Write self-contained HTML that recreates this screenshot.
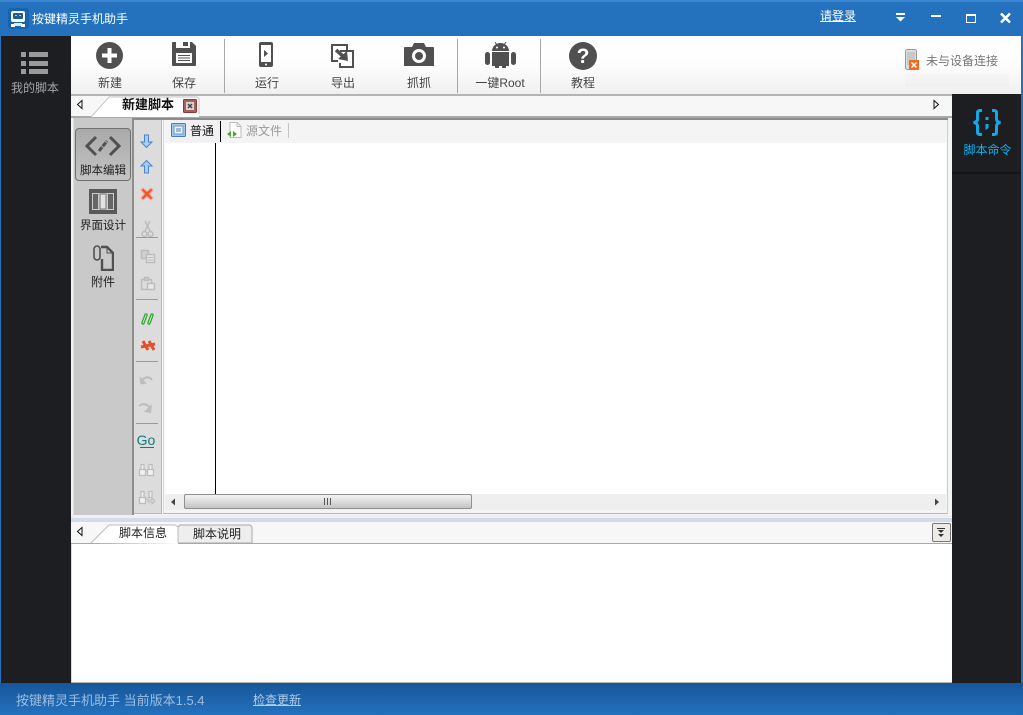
<!DOCTYPE html>
<html lang="zh"><head><meta charset="utf-8"><title>按键精灵手机助手</title>
<style>
html,body{margin:0;padding:0}
body{width:1023px;height:715px;position:relative;overflow:hidden;background:#2472bd;font-family:"Liberation Sans","Noto Sans CJK SC",sans-serif;font-size:12px;color:#333}
div,svg,span{position:absolute;box-sizing:border-box}
.t{white-space:nowrap;line-height:16px;text-align:center}
.tb{width:60px;top:75px;color:#444;font-size:12px}
.sep{width:1px;background:#a8a8a8;top:39px;height:54px}
.hr{left:136px;width:22px;height:1px;background:#9a9a9a}
</style></head><body>
<div style="left:0;top:0;width:1023px;height:2px;background:#3a86d0"></div>
<svg style="left:8px;top:8px" width="21" height="21" viewBox="0 0 21 21"><rect x="0" y="0" width="21" height="21" rx="3" fill="#1863ad"/><rect x="3" y="3" width="14" height="11" rx="2" fill="#fff"/><rect x="5" y="5" width="10" height="6" rx="1" fill="#1f5d96"/><rect x="7" y="7" width="2" height="1" fill="#9cc"/><rect x="11" y="7" width="2" height="1" fill="#9cc"/><path d="M6 15h8v3H6z" fill="#dfeaf5"/><rect x="3" y="16" width="4" height="3" fill="#fff"/><rect x="13" y="16" width="4" height="3" fill="#fff"/></svg>
<div class="t" style="left:32px;top:11px;color:#fff;font-size:12px">按键精灵手机助手</div>
<div class="t" style="left:820px;top:8px;color:#fff;text-decoration:underline;font-size:12px">请登录</div>
<svg style="left:890px;top:8px" width="130" height="20" viewBox="0 0 130 20" fill="#fff"><rect x="6" y="5" width="9" height="2"/><path d="M6 9h9l-4.500 4.500z"/><rect x="41" y="7" width="10" height="2"/><rect x="76.500" y="6.500" width="9" height="8" fill="none" stroke="#fff"/><rect x="76" y="6" width="10" height="2"/><path d="M111 5.500l9 9M120 5.500l-9 9" stroke="#fff" stroke-width="2.500" fill="none"/></svg>

<div style="left:1px;top:36px;width:70px;height:647px;background:#1c1e21"></div>
<svg style="left:20px;top:52px" width="30" height="24" fill="#9a9a9a"><rect x="1" y="0" width="5" height="5"/><rect x="9" y="0" width="19" height="5"/><rect x="1" y="9" width="5" height="5"/><rect x="9" y="9" width="19" height="5"/><rect x="1" y="17" width="5" height="5"/><rect x="9" y="17" width="19" height="5"/></svg>
<div class="t" style="left:1px;width:68px;top:80px;color:#a5a5a5">我的脚本</div>

<div style="left:71px;top:36px;width:950px;height:58px;background:linear-gradient(#fff 0,#fdfdfd 50%,#f0f0f0 100%)"></div>
<div style="left:71px;top:94px;width:881px;height:2px;background:#b4b4b4"></div>
<div style="left:952px;top:94px;width:69px;height:2px;background:#1c1e21"></div>

<svg style="left:96px;top:42px" width="28" height="28"><circle cx="13.500" cy="13.500" r="13.500" fill="#505050"/><rect x="6" y="11.500" width="15" height="4" fill="#fff"/><rect x="11.500" y="6" width="4" height="15" fill="#fff"/></svg>
<div class="t tb" style="left:80px">新建</div>
<svg style="left:172px;top:42px" width="25" height="25"><path d="M0 1a1 1 0 0 1 1-1h3v6h14V0h2l4 4v19a1 1 0 0 1-1 1H1a1 1 0 0 1-1-1z" fill="#505050"/><rect x="11" y="0" width="5" height="4" fill="#505050"/><rect x="4" y="11" width="16" height="10" fill="#fff"/><path d="M6 13.500h12M6 16h12M6 18.500h12" stroke="#505050"/></svg>
<div class="t tb" style="left:154px">保存</div>
<div class="sep" style="left:224px"></div>
<svg style="left:259px;top:42px" width="15" height="25"><rect width="14" height="25" rx="2" fill="#505050"/><rect x="2" y="3" width="10" height="17" fill="#fff"/><path d="M5 8l4 3.500-4 3.500z" fill="#505050"/><circle cx="7" cy="22.500" r="1" fill="#fff"/></svg>
<div class="t tb" style="left:237px">运行</div>
<svg style="left:331px;top:44px" width="24" height="25" fill="none" stroke="#505050" stroke-width="2"><path d="M7 17H1V1h15v5"/><path d="M9 7h13v16H9v-4"/><path d="M5 6l8 7" stroke-width="3.500"/><path d="M16 7l1 10-10-2z" fill="#505050" stroke="none"/></svg>
<div class="t tb" style="left:313px">导出</div>
<svg style="left:404px;top:42px" width="30" height="24"><path d="M0 6a1 1 0 0 1 1-1h7l2-4h10l2 4h7a1 1 0 0 1 1 1v18H0z" fill="#505050"/><circle cx="15" cy="14" r="7" fill="#fff"/><circle cx="15" cy="14" r="4" fill="#505050"/></svg>
<div class="t tb" style="left:389px">抓抓</div>
<div class="sep" style="left:457px"></div>
<svg style="left:485px;top:42px" width="31" height="26" fill="#505050"><path d="M7 9a8.500 8 0 0 1 17 0z"/><rect x="7" y="10" width="17" height="14"/><rect x="10" y="22" width="4" height="4"/><rect x="17" y="22" width="4" height="4"/><rect x="0" y="10" width="5" height="13" rx="2.500"/><rect x="26" y="10" width="5" height="13" rx="2.500"/><circle cx="12" cy="5.500" r="1" fill="#fff"/><circle cx="19" cy="5.500" r="1" fill="#fff"/><path d="M10 0l2 3M21 0l-2 3" stroke="#505050"/></svg>
<div class="t tb" style="left:470px">一键Root</div>
<div class="sep" style="left:540px"></div>
<svg style="left:569px;top:42px" width="28" height="28"><circle cx="14" cy="14" r="14" fill="#505050"/><text x="14" y="21" font-family="Liberation Sans" font-weight="bold" font-size="21" fill="#fff" text-anchor="middle">?</text></svg>
<div class="t tb" style="left:553px">教程</div>

<svg style="left:905px;top:49px" width="18" height="24"><rect x="0.500" y="0.500" width="11" height="20" rx="2" fill="#ddd" stroke="#999"/><rect x="2" y="3" width="8" height="13" fill="#c8c8c8"/><rect x="4" y="11" width="10" height="10" fill="#f26a1b"/><path d="M6.500 13.500l5 5M11.500 13.500l-5 5" stroke="#fff" stroke-width="1.500"/></svg>
<div class="t" style="left:926px;top:53px;color:#777">未与设备连接</div>
<div style="left:905px;top:74px;width:104px;height:13px;background:linear-gradient(#f6f6f6,#efefef)"></div>

<div style="left:952px;top:96px;width:69px;height:587px;background:#1c1e21"></div>
<div style="left:952px;top:172px;width:69px;height:2px;background:#131416"></div>
<svg style="left:970px;top:107px" width="34" height="30" fill="none" stroke="#11a9e8" stroke-width="3"><path d="M12 3.500H10Q7.500 3.500 7.500 6V12Q7.500 15 3.500 15.500Q7.500 16 7.500 19V25Q7.500 27.500 10 27.500H12"/><path d="M22 3.500H24Q26.500 3.500 26.500 6V12Q26.500 15 30.500 15.500Q26.500 16 26.500 19V25Q26.500 27.500 24 27.500H22"/><rect x="15.500" y="10" width="3" height="3" fill="#11a9e8" stroke="none"/><path d="M15.500 17h3v4l-3 2z" fill="#11a9e8" stroke="none"/></svg>
<div class="t" style="left:952px;width:71px;top:142px;color:#0fb0ee">脚本命令</div>

<div style="left:71px;top:96px;width:881px;height:21px;background:#f7f7f7"></div>
<div style="left:71px;top:116px;width:881px;height:2px;background:#a9a9a9"></div>
<svg style="left:76px;top:99px" width="8" height="11"><path d="M6 1.500L1.500 5.500 6 9.500z" fill="#fff" stroke="#111"/></svg>
<svg style="left:932px;top:99px" width="8" height="11"><path d="M2 1.500L6.500 5.500 2 9.500z" fill="#fff" stroke="#111"/></svg>
<svg style="left:90px;top:96px" width="112" height="22"><path d="M1 21L19 1h88l2 2v18z" fill="#fff"/><path d="M1 21L19 1h88l2 2v15" fill="none" stroke="#c6c6c6"/></svg>
<div class="t" style="left:122px;top:97px;color:#111;font-weight:bold;font-size:13px">新建脚本</div>
<svg style="left:183px;top:99px" width="14" height="14"><rect x=".5" y=".5" width="13" height="13" rx="1" fill="#a8625e" stroke="#8a3a36"/><rect x="3" y="3" width="8" height="8" fill="#dcd2d2"/><path d="M5 5l4 4M9 5l-4 4" stroke="#444" stroke-width="1.500"/></svg>

<div style="left:71px;top:118px;width:881px;height:401px;background:#f4f4f4"></div>
<div style="left:73px;top:118px;width:61px;height:398px;background:#c9c9c9;border-left:1px solid #dcdcdc"></div>
<div style="left:132px;top:118px;width:2px;height:398px;background:#8e8e8e"></div>
<div style="left:134px;top:118px;width:28px;height:396px;background:#dcdcdc;border-right:1px solid #b8b8b8;border-bottom:1px solid #b8b8b8"></div>
<div style="left:133px;top:118px;width:815px;height:2px;background:#8c8c8c"></div>

<div style="left:75px;top:128px;width:56px;height:53px;border:1px solid #707070;border-radius:4px;background:linear-gradient(#a9a9a9,#c4c4c4)"></div>
<svg style="left:85px;top:135px" width="36" height="22" fill="none" stroke="#505050" stroke-width="3"><path d="M11 2L2 11l9 9M25 2l9 9-9 9"/><path d="M14 16l8-10" stroke-dasharray="5 1"/></svg>
<div class="t" style="left:75px;width:56px;top:163px;color:#222;font-size:11.500px">脚本编辑</div>
<svg style="left:89px;top:189px" width="28" height="25"><rect width="28" height="25" fill="#5a5a5a"/><rect x="3" y="4" width="22" height="17" fill="#ccc"/><rect x="4" y="5" width="5" height="15" fill="#666"/><rect x="19" y="5" width="5" height="15" fill="#666"/><rect x="11" y="5" width="6" height="15" fill="#e2e2e2" stroke="#777"/></svg>
<div class="t" style="left:75px;width:56px;top:218px;color:#222;font-size:11.500px">界面设计</div>
<svg style="left:92px;top:244px" width="22" height="27" fill="none" stroke="#505050" stroke-width="2.400"><path d="M9 3h6l6 6v17H10V15"/><path d="M15 3v6h6" stroke-width="1"/><path d="M2 5a3 3 0 0 1 6 0v8a3 3 0 0 1-6 0z" fill="#c9c9c9" stroke-width="1.600"/></svg>
<div class="t" style="left:75px;width:56px;top:274px;color:#222">附件</div>

<svg style="left:134px;top:130px" width="28" height="380">
<path d="M10.500 5h4v7h3.500l-5.500 5.500L7 12h3.500z" fill="#a9cdf0" stroke="#4a86c8"/>
<path d="M10.500 43h4v-7h3.500l-5.500-5.500L7 36h3.500z" fill="#a9cdf0" stroke="#4a86c8"/>
<path d="M9 58l4 3.500L17 58l2 2-3.500 4 3.500 4-2 2-4-3.500L9 70l-2-2 3.500-4L7 60z" fill="#f0562f" stroke="#f0a896"/>
<g fill="none" stroke="#bcbcbc" stroke-width="1.500">
<circle cx="10.500" cy="104" r="2.500"/><circle cx="16.500" cy="104" r="2.500"/><path d="M11 101l5-10M16 101l-5-10"/>
<path d="M7.500 120.500h7v8h-7z" fill="#d0d0d0"/><path d="M12.500 124.500h8v8h-8z" fill="#e4e4e4"/><path d="M14 127.500h5M14 130h5" stroke-width="1"/>
<path d="M7.500 149.500h10v10h-10z"/><path d="M10.500 147.500h4v3h-4z" fill="#ccc"/><path d="M13.500 153.500h7v6h-7z" fill="#e8e8e8"/>
<path d="M6 256v-7h7" stroke="none"/>
<path d="M8 250c4-4 8-3 10 0" stroke-width="2"/><path d="M5.500 246.500l1 8 6.500-1z" fill="#bcbcbc" stroke="none"/>
<path d="M5 276c4-3 8-2 10 1" stroke-width="2"/><path d="M18 274l-1 9-7-1z" fill="#bcbcbc" stroke="none"/>
<path d="M5.500 339.500h6v6h-6z M13.500 339.500h6v6h-6z M7 334.500h3v5H7z M15 334.500h3v5h-3z M11.500 341h2" fill="#f0f0f0" stroke-width="1.200"/>
<path d="M5.500 367.500h6v6h-6z M13.500 367.500h4 M7 361.500h3v6H7z M15 361.500h3v6h-3z M11.500 369h2" fill="#f0f0f0" stroke-width="1.200"/><path d="M14 370h4v-2l3 3-3 3v-2h-4z" stroke-width="1"/>
</g>
<g fill="none" stroke-linecap="round"><path d="M9 193l3-8M15 193l3-8" stroke="#2da52d" stroke-width="3.400"/><path d="M9 193l3-8M15 193l3-8" stroke="#cdeec5" stroke-width="1"/></g>
<g fill="none" stroke="#e2502d" stroke-width="3"><path d="M9 211l5 9M15 211l5 9M7 217l14-3"/></g>
<text x="12" y="315" font-family="Liberation Sans" font-size="14" fill="#137a80" text-anchor="middle">Go</text>
<rect x="6" y="317" width="14" height="1" fill="#137a80"/>
</svg>
<div class="hr" style="top:237px"></div>
<div class="hr" style="top:299px"></div>
<div class="hr" style="top:361px"></div>
<div class="hr" style="top:423px"></div>

<div style="left:163px;top:120px;width:785px;height:394px;background:#f4f4f4;border-right:1px solid #d0d0d0;border-bottom:1px solid #b8b8b8;border-left:1px solid #ddd"></div>
<div style="left:165px;top:143px;width:781px;height:351px;background:#fff"></div>
<div style="left:215px;top:143px;width:1px;height:351px;background:#000"></div>
<div style="left:170px;top:120px;width:50px;height:22px;background:#f1f1f4"></div>
<svg style="left:171px;top:123px" width="15" height="14"><rect x=".5" y=".5" width="14" height="13" rx="1" fill="#a8c6ea" stroke="#4a7eb8"/><rect x="3" y="3" width="9" height="8" fill="#eef4fb" stroke="#6b97c9"/><path d="M5 6h5M5 8h5" stroke="#4a7eb8"/></svg>
<div class="t" style="left:190px;top:123px;color:#111">普通</div>
<div style="left:220px;top:121px;width:1px;height:21px;background:#000"></div>
<svg style="left:226px;top:122px" width="16" height="16"><path d="M4 .5h7l4 4v11H4z" fill="#fff" stroke="#bbb"/><path d="M11 .5v4h4" fill="none" stroke="#bbb"/><path d="M5 9l-4 3 4 3zM7 9l4 3-4 3z" fill="#4fa52d"/></svg>
<div class="t" style="left:246px;top:123px;color:#999">源文件</div>
<div style="left:288px;top:123px;width:1px;height:15px;background:#c4c4c4"></div>

<div style="left:165px;top:494px;width:781px;height:16px;background:#efefef"></div>
<svg style="left:170px;top:498px" width="7" height="8"><path d="M5 .5L1 4l4 3.500z" fill="#444"/></svg>
<svg style="left:934px;top:498px" width="7" height="8"><path d="M1 .5L5 4 1 7.500z" fill="#444"/></svg>
<div style="left:184px;top:494px;width:288px;height:15px;border:1px solid #8f8f8f;border-radius:2px;background:linear-gradient(#f2f2f2,#dfdfdf 45%,#c4c4c4)"></div>
<svg style="left:323px;top:498px" width="10" height="8"><path d="M1.500 0v7M4.500 0v7M7.500 0v7" stroke="#555"/></svg>

<div style="left:71px;top:515px;width:881px;height:3px;background:#efefef"></div>
<div style="left:71px;top:518px;width:881px;height:4px;background:#d3daec"></div>
<div style="left:71px;top:522px;width:881px;height:21px;background:#f7f7f7"></div>
<div style="left:71px;top:543px;width:881px;height:1px;background:#a9a9a9"></div>
<svg style="left:76px;top:526px" width="8" height="11"><path d="M6 1.500L1.500 5.500 6 9.500z" fill="#fff" stroke="#111"/></svg>
<svg style="left:90px;top:522px" width="165" height="23"><path d="M88 21V5l2-2h70l2 2v16z" fill="#eee" stroke="#a8a8a8"/><path d="M1 21L19 3h66l3 2v17z" fill="#fff"/><path d="M1 21L19 3h66l3 2v16" fill="none" stroke="#bbb"/></svg>
<div class="t" style="left:119px;top:525px;color:#222">脚本信息</div>
<div class="t" style="left:193px;top:526px;color:#222">脚本说明</div>
<div style="left:932px;top:523px;width:19px;height:19px;border:1px solid #777;border-radius:2px;background:#ecebe6"></div>
<svg style="left:936px;top:528px" width="11" height="10" fill="#333"><rect x="1" y="0" width="8" height="1"/><path d="M2 2h6L5 5zM2 6h6L5 9z"/></svg>

<div style="left:72px;top:544px;width:880px;height:138px;background:#fff"></div>
<div style="left:71px;top:544px;width:1px;height:139px;background:#d8d8d8"></div>
<div style="left:71px;top:682px;width:881px;height:1px;background:#b4b4b4"></div>

<div style="left:0;top:683px;width:1023px;height:32px;background:linear-gradient(#16569a,#2472bd)"></div>
<div class="t" style="left:16px;top:693px;color:#9dbde0;font-size:13px">按键精灵手机助手 当前版本1.5.4</div>
<div class="t" style="left:253px;top:692px;color:#b0cdec;text-decoration:underline">检查更新</div>
</body></html>
